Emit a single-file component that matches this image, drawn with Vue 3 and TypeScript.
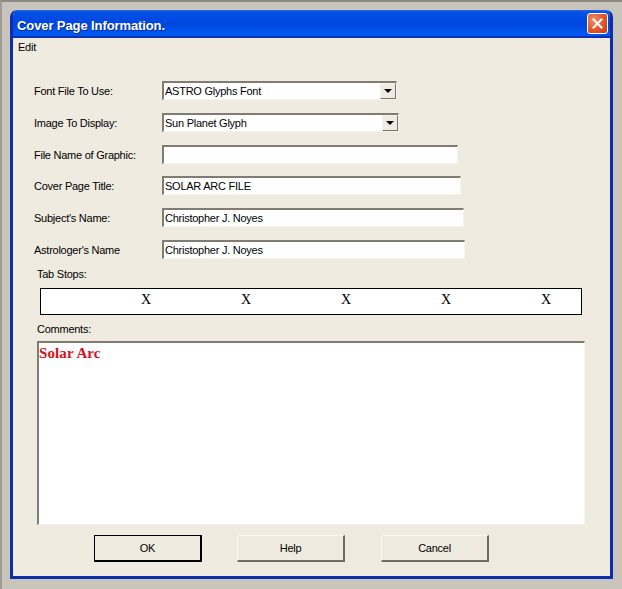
<script setup lang="ts">
const fields = [
  { label: "Font File To Use:", value: "ASTRO Glyphs Font", width: 235, combo: true, top: 0 },
  { label: "Image To Display:", value: "Sun Planet Glyph", width: 237, combo: true, top: 13 },
  { label: "File Name of Graphic:", value: "", width: 296, combo: false, top: 13 },
  { label: "Cover Page Title:", value: "SOLAR ARC FILE", width: 299, combo: false, top: 12 },
  { label: "Subject's Name:", value: "Christopher J. Noyes", width: 302, combo: false, top: 13 },
  { label: "Astrologer's Name", value: "Christopher J. Noyes", width: 303, combo: false, top: 13 }
];

const tabStops = [1, 2, 3, 4, 5];
</script>

<template>
  <div class="desktop">
    <div class="window">
      <div class="titlebar">
        <span class="title">Cover Page Information.</span>
        <button class="close" aria-label="Close">
          <svg width="13" height="13" viewBox="0 0 13 13">
            <path d="M2.5 2.5 L10.5 10.5 M10.5 2.5 L2.5 10.5" stroke="#fff" stroke-width="2" stroke-linecap="square" />
          </svg>
        </button>
      </div>
      <div class="menu">Edit</div>
      <div class="body">
        <div class="fields">
          <div v-for="f in fields" :key="f.label" class="row" :style="{ marginTop: f.top + 'px' }">
            <span class="label">{{ f.label }}</span>
            <div class="field" :style="{ width: f.width + 'px' }">
              <span class="value">{{ f.value }}</span>
              <span v-if="f.combo" class="arrow"><i></i></span>
            </div>
          </div>
        </div>

        <div class="tab-label">Tab Stops:</div>
        <div class="tabs">
          <span v-for="t in tabStops" :key="t" class="tab-x">X</span>
        </div>

        <div class="comments-label">Comments:</div>
        <div class="comments">Solar Arc</div>

        <div class="buttons">
          <button class="btn default">OK</button>
          <button class="btn">Help</button>
          <button class="btn">Cancel</button>
        </div>
      </div>
    </div>
  </div>
</template>

<style>
html,
body {
  margin: 0;
  background: #c9c5bd;
}
</style>

<style scoped>
.desktop {
  width: 622px;
  height: 589px;
  box-sizing: border-box;
  padding: 8px 9px 10px 8px;
  background: #c9c5bd;
  border-top: 2px solid #8f8b84;
  border-left: 2px solid #a09c95;
  font-family: "Liberation Sans", Arial, sans-serif;
  font-size: 11px;
  letter-spacing: -0.25px;
  color: #000;
}

.window {
  height: 100%;
  box-sizing: border-box;
  display: flex;
  flex-direction: column;
  background: #efebe0;
  border: 3px solid #0a2fa8;
  border-top: 0;
  border-radius: 7px 7px 0 0;
  overflow: hidden;
}

.titlebar {
  height: 28px;
  box-sizing: border-box;
  flex: none;
  margin: 0 -3px;
  padding: 0 5px 0 7px;
  display: flex;
  align-items: center;
  justify-content: space-between;
  background: linear-gradient(#2a6be0 0, #0350e6 8%, #0046e0 55%, #0058f0 90%);
  border-bottom: 2px solid #0b30b0;
}

.title {
  padding-top: 5px;
  color: #fff;
  font-size: 13px;
  font-weight: 700;
  letter-spacing: -0.1px;
  text-shadow: 1px 1px 0 #0a2a90;
}

.close {
  width: 21px;
  height: 21px;
  padding: 0;
  display: flex;
  align-items: center;
  justify-content: center;
  border: 1px solid #fff;
  border-radius: 3px;
  background: radial-gradient(circle at 30% 30%, #ee8a66, #dd4a1e 70%, #c23a12);
}

.menu {
  height: 17px;
  line-height: 17px;
  margin-top: 1px;
  padding-left: 5px;
  flex: none;
}

.body {
  flex: 1;
  padding: 0 0 0 21px;
}

.fields {
  padding-top: 25px;
}

.row {
  display: flex;
  align-items: center;
  height: 19px;
}

.label {
  width: 128px;
  flex: none;
}

.field {
  height: 19px;
  box-sizing: border-box;
  display: flex;
  align-items: center;
  justify-content: space-between;
  background: #fff;
  border-top: 2px solid #807c74;
  border-left: 2px solid #807c74;
  border-right: 1px solid #f6f3ea;
  border-bottom: 1px solid #f6f3ea;
}

.value {
  padding-left: 1px;
  white-space: nowrap;
}

.arrow {
  width: 16px;
  height: 16px;
  flex: none;
  display: flex;
  align-items: center;
  justify-content: center;
  box-sizing: border-box;
  background: #efebe0;
  border-top: 1px solid #f6f3ea;
  border-left: 1px solid #f6f3ea;
  border-right: 1px solid #7a766e;
  border-bottom: 1px solid #7a766e;
}

.arrow i {
  width: 0;
  height: 0;
  border-left: 4px solid transparent;
  border-right: 4px solid transparent;
  border-top: 4px solid #000;
}

.tab-label {
  margin: 8px 0 0 3px;
  height: 14px;
  line-height: 14px;
}

.tabs {
  width: 542px;
  height: 27px;
  box-sizing: border-box;
  margin: 7px 0 0 6px;
  display: grid;
  grid-template-columns: repeat(5, 100px);
  padding-left: 55px;
  align-items: center;
  background: #fff;
  border: 1px solid #000;
}

.tab-x {
  text-align: center;
  font-family: "Liberation Serif", serif;
  font-size: 14px;
  font-weight: 400;
  margin-top: -3px;
}

.comments-label {
  margin: 7px 0 0 3px;
  height: 14px;
  line-height: 14px;
}

.comments {
  width: 548px;
  height: 184px;
  box-sizing: border-box;
  margin: 5px 0 0 3px;
  padding: 2px 0;
  background: #fff;
  border-top: 2px solid #807c74;
  border-left: 2px solid #807c74;
  border-right: 1px solid #f6f3ea;
  border-bottom: 1px solid #f6f3ea;
  font-family: "Liberation Serif", serif;
  font-size: 15px;
  font-weight: 700;
  letter-spacing: 0.1px;
  color: #d5101c;
}

.buttons {
  display: flex;
  gap: 35px;
  margin: 10px 0 0 60px;
}

.btn {
  width: 108px;
  height: 27px;
  padding: 0;
  box-sizing: border-box;
  background: #efebe0;
  font: inherit;
  letter-spacing: inherit;
  color: #000;
  border: 1px solid #f8f6ef;
  border-right: 2px solid #6e6b64;
  border-bottom: 2px solid #6e6b64;
}

.btn:last-child {
  margin-left: 1px;
}

.btn.default {
  border: 1px solid #000;
  border-right: 2px solid #000;
  border-bottom: 2px solid #000;
}
</style>
